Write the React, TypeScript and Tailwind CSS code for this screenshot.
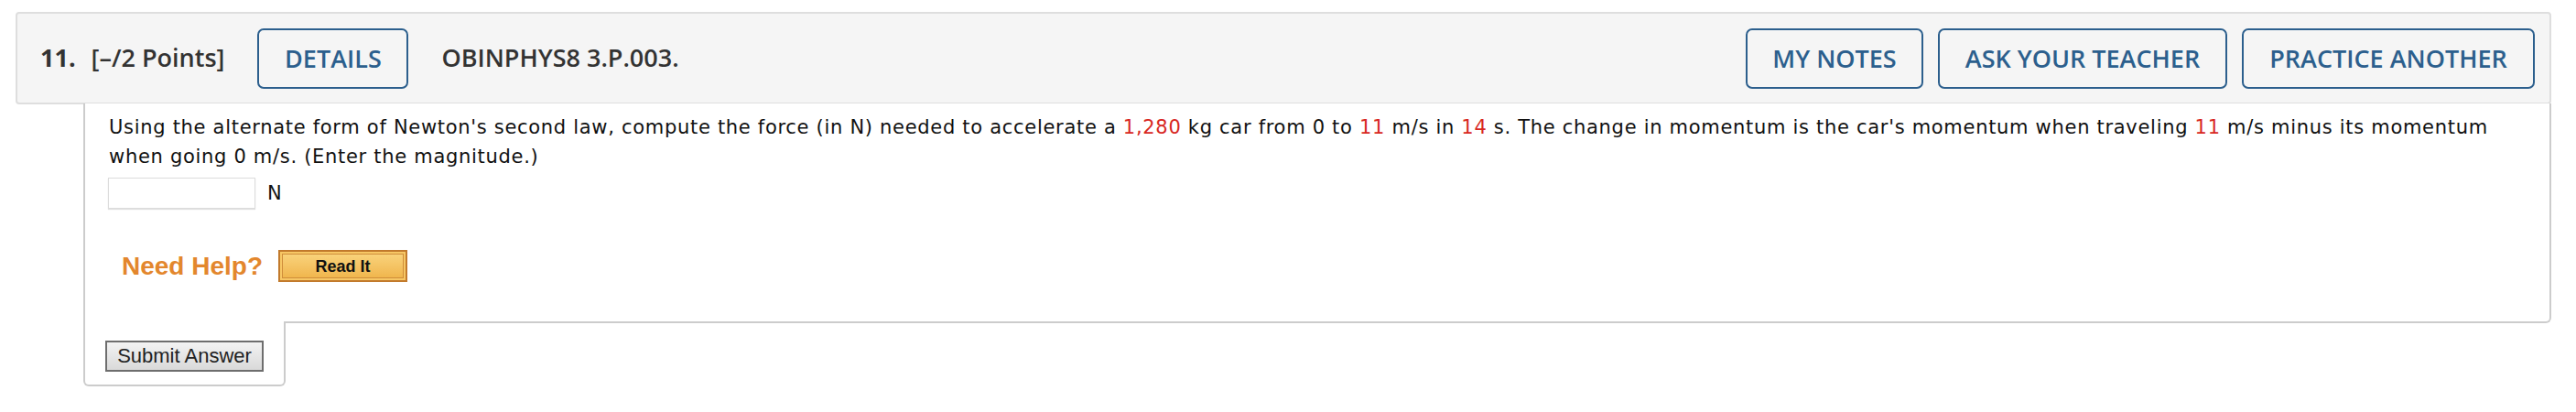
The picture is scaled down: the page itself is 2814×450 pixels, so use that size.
import React from 'react';

const Red: React.FC<{ children: React.ReactNode }> = ({ children }) => (
  <span className="text-[#d8281f]">{children}</span>
);

const HeaderButton: React.FC<{ label: string; w: string }> = ({ label, w }) => (
  <button
    className={`h-[66px] ${w} shrink-0 rounded-[7px] border-2 border-[#2c5f8d] bg-transparent text-[27px] font-semibold text-[#2c5f8d] leading-none`}
  >
    {label}
  </button>
);

export default function App() {
  return (
    <div className="w-full h-[450px] bg-white pt-[13px] pl-[17px] pr-[27px] font-['Open_Sans',sans-serif]">
      {/* question header */}
      <div className="h-[101px] flex items-center rounded-[4px] border-2 border-[#dedede] bg-[#f5f5f5] pl-[25px] pr-[16px] text-[#333]">
        <span className="text-[27px] font-bold">11.</span>
        <span className="ml-[17px] text-[27px] font-semibold">[–/2 Points]</span>
        <div className="ml-[36px]">
          <HeaderButton label="DETAILS" w="w-[165px]" />
        </div>
        <span className="ml-[36px] text-[27px] font-semibold">OBINPHYS8 3.P.003.</span>
        <div className="ml-auto flex gap-[16px]">
          <HeaderButton label="MY NOTES" w="w-[194px]" />
          <HeaderButton label="ASK YOUR TEACHER" w="w-[316px]" />
          <HeaderButton label="PRACTICE ANOTHER" w="w-[320px]" />
        </div>
      </div>

      {/* question body */}
      <div className="ml-[74px] -mt-px">
        <div className="h-[240px] border-2 border-t-0 border-[#cccccc] rounded-br-[6px] bg-white pl-[26px] pt-[10px] pr-[40px] font-['DejaVu_Sans',sans-serif] text-[21px] tracking-[0.7px] leading-[32px] text-[#111]">
          <p>
            Using the alternate form of Newton's second law, compute the force (in N) needed to accelerate a <Red>1,280</Red> kg
            car from 0 to <Red>11</Red> m/s in <Red>14</Red> s. The change in momentum is the car's momentum when traveling{' '}
            <Red>11</Red> m/s minus its momentum when going 0 m/s. (Enter the magnitude.)
          </p>
          <div className="mt-[7px] flex items-center">
            <input
              className="-ml-px h-[34px] w-[161px] border border-[#dcdcdc] shadow-[0_1px_1px_rgba(0,0,0,0.12)] bg-white outline-none"
              type="text"
            />
            <span className="ml-[13px]">N</span>
          </div>
          <div className="mt-[45px] ml-[14px] flex items-center">
            <span className="font-['Liberation_Sans',sans-serif] text-[28px] tracking-normal font-bold text-[#e3872d] leading-none">Need Help?</span>
            <div className="ml-[17px] w-[141px] h-[35px] border-2 border-[#c27a2c] bg-[#f7c765] p-[2px]">
              <div className="h-full flex items-center justify-center border border-[#cf8d3a] bg-gradient-to-b from-[#f9d27a] to-[#f0b64d] font-['Liberation_Sans',sans-serif] text-[18px] tracking-normal font-bold text-[#111] leading-none">
                Read It
              </div>
            </div>
          </div>
        </div>
        {/* submit tab */}
        <div className="-mt-[2px] w-[221px] h-[71px] border-2 border-t-0 border-[#cccccc] rounded-b-[6px] bg-white pl-[22px] pt-[21px]">
          <button className="w-[173px] h-[34px] border-2 border-[#6e6e6e] bg-gradient-to-b from-[#f3f3f3] to-[#d9d9d9] font-['Liberation_Sans',sans-serif] text-[22px] text-[#222] leading-none">
            Submit Answer
          </button>
        </div>
      </div>
    </div>
  );
}
